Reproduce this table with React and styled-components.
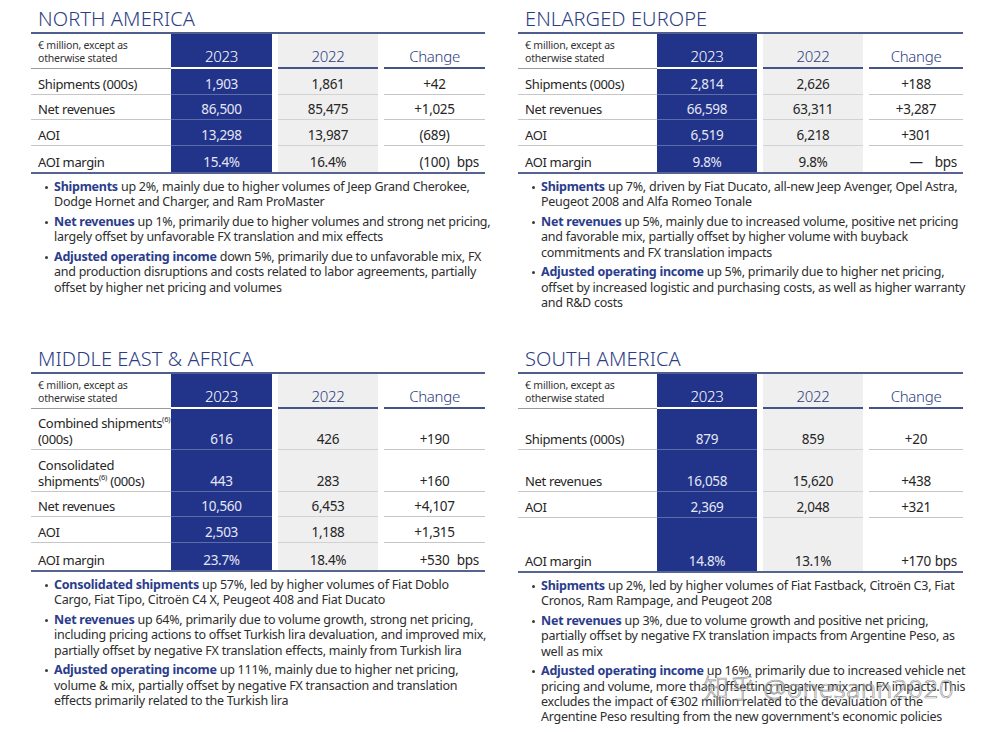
import React from "react";
import styled, { createGlobalStyle } from "styled-components";

const GlobalStyle = createGlobalStyle`
  html, body {
    margin: 0;
    padding: 0;
    background: #fff;
  }
  body {
    font-family: "Noto Sans", "Open Sans", sans-serif;
    color: #2a2a2a;
  }
`;

const NAVY = "#22348a";
const INK = "#2d3d82";

const Page = styled.div`
  position: relative;
  width: 1003px;
  height: 732px;
  overflow: hidden;
  display: grid;
  grid-template-columns: 454px 445px;
  grid-template-rows: 340px auto;
  column-gap: 33px;
  padding-left: 31px;
  box-sizing: border-box;
`;

const Panel = styled.section`
  display: flex;
  flex-direction: column;
`;

const Title = styled.h2`
  margin: 6px 0 1px 7px;
  font-size: 20px;
  line-height: 25px;
  font-weight: 300;
  color: ${INK};
  letter-spacing: 0.1px;
`;

const Table = styled.div`
  border-top: 2px solid #4f5e8c;
  border-bottom: 2px solid #56658f;
`;

const Row = styled.div`
  display: flex;
  height: ${(p) => p.$h}px;
`;

const lineFor = (kind, head, last) => {
  if (last) return "none";
  if (head) {
    if (kind === "label") return "1px solid #9a9a9a";
    if (kind === "cur") return "2px solid #fff";
    return "2px solid #44548a";
  }
  if (kind === "cur") return "1px solid rgba(255,255,255,0.28)";
  if (kind === "prev") return "1px solid #d2d2d2";
  return "1px solid #c6c6c6";
};

const sizeFor = (kind, head) => {
  if (head && kind !== "label") return 15;
  if (kind === "label") return 13;
  return 13.5;
};

const Cell = styled.div`
  flex: none;
  width: ${(p) => p.$w}px;
  margin-left: ${(p) => (p.$kind === "prev" || p.$kind === "chg" ? 6 : 0)}px;
  box-sizing: border-box;
  display: flex;
  align-items: flex-end;
  justify-content: ${(p) => (p.$kind === "label" ? "flex-start" : "center")};
  padding: 0 0 ${(p) => (p.$head ? (p.$kind === "label" ? 4 : 2) : 2)}px
    ${(p) => (p.$kind === "label" ? 7 : 0)}px;
  background: ${(p) => (p.$kind === "cur" ? NAVY : p.$kind === "prev" ? "#efefef" : "#fff")};
  color: ${(p) =>
    p.$kind === "cur" ? (p.$head ? "#fff" : "#e4e7f4") : p.$head && p.$kind !== "label" ? INK : "#262626"};
  font-size: ${(p) => sizeFor(p.$kind, p.$head)}px;
  font-weight: ${(p) => (p.$head && p.$kind !== "label" ? 300 : 400)};
  line-height: ${(p) => (p.$head && p.$kind !== "label" ? 18 : 15.5)}px;
  letter-spacing: ${(p) => (p.$kind === "label" ? -0.35 : -0.3)}px;
  white-space: nowrap;
  border-bottom: ${(p) => lineFor(p.$kind, p.$head, p.$last)};
`;

const Unit = styled.div`
  font-size: 10.5px;
  line-height: 12.5px;
  letter-spacing: -0.2px;
  color: #333;
`;

const ChangeBox = styled.div`
  width: 100%;
  display: grid;
  grid-template-columns: 1fr auto 1fr;
  align-items: end;
`;

const ChangeValue = styled.span`
  grid-column: 2;
`;

const Bps = styled.span`
  grid-column: 3;
  justify-self: end;
  padding-right: 6px;
`;

const Sup = styled.sup`
  font-size: 7.5px;
  line-height: 0;
  vertical-align: 6px;
  letter-spacing: -0.2px;
`;

const Bullets = styled.ul`
  list-style: none;
  margin: 5px 0 0;
  padding: 0;
`;

const Bullet = styled.li`
  position: relative;
  padding-left: 23px;
  margin-bottom: 4.5px;
  font-size: 12.5px;
  line-height: 15.3px;
  letter-spacing: -0.25px;
  white-space: nowrap;
  color: #2e2e2e;

  &::before {
    content: "";
    position: absolute;
    left: 14px;
    top: 6.5px;
    width: 3px;
    height: 3px;
    border-radius: 50%;
    background: #3a3a3a;
  }
`;

const Term = styled.b`
  color: #2b3c8c;
  font-weight: 700;
`;

const Watermark = styled.div`
  position: absolute;
  left: 703px;
  top: 668px;
  font-family: "Noto Sans", "Noto Sans CJK SC", sans-serif;
  font-size: 26px;
  font-weight: 300;
  letter-spacing: 0.5px;
  color: rgba(255, 255, 255, 0.5);
  -webkit-text-stroke: 0.7px rgba(110, 110, 110, 0.75);
  pointer-events: none;
`;

const LEFT = [140, 101, 100, 101];
const RIGHT = [139, 100, 100, 94];

const TOP_H = [35, 26, 25, 26, 26];
const MEA_H = [35, 41, 42, 25, 26, 27];
const SA_H = [35, 41, 42, 26, 53];

const SH = <Sup>(6)</Sup>;

const sections = [
  {
    title: "NORTH AMERICA",
    widths: LEFT,
    heights: TOP_H,
    rows: [
      ["Shipments (000s)", "1,903", "1,861", "+42"],
      ["Net revenues", "86,500", "85,475", "+1,025"],
      ["AOI", "13,298", "13,987", "(689)"],
      ["AOI margin", "15.4%", "16.4%", "(100)", "bps"],
    ],
    bullets: [
      ["Shipments", ["up 2%, mainly due to higher volumes of Jeep Grand Cherokee,", "Dodge Hornet and Charger, and Ram ProMaster"]],
      ["Net revenues", ["up 1%, primarily due to higher volumes and strong net pricing,", "largely offset by unfavorable FX translation and mix effects"]],
      ["Adjusted operating income", ["down 5%, primarily due to unfavorable mix, FX", "and production disruptions and costs related to labor agreements, partially", "offset by higher net pricing and volumes"]],
    ],
  },
  {
    title: "ENLARGED EUROPE",
    widths: RIGHT,
    heights: TOP_H,
    rows: [
      ["Shipments (000s)", "2,814", "2,626", "+188"],
      ["Net revenues", "66,598", "63,311", "+3,287"],
      ["AOI", "6,519", "6,218", "+301"],
      ["AOI margin", "9.8%", "9.8%", "—", "bps"],
    ],
    bullets: [
      ["Shipments", ["up 7%, driven by Fiat Ducato, all-new Jeep Avenger, Opel Astra,", "Peugeot 2008 and Alfa Romeo Tonale"]],
      ["Net revenues", ["up 5%, mainly due to increased volume, positive net pricing", "and favorable mix, partially offset by higher volume with buyback", "commitments and FX translation impacts"]],
      ["Adjusted operating income", ["up 5%, primarily due to higher net pricing,", "offset by increased logistic and purchasing costs, as well as higher warranty", "and R&D costs"]],
    ],
  },
  {
    title: "MIDDLE EAST & AFRICA",
    widths: LEFT,
    heights: MEA_H,
    rows: [
      [<>Combined shipments{SH}<br />(000s)</>, "616", "426", "+190"],
      [<>Consolidated<br />shipments{SH} (000s)</>, "443", "283", "+160"],
      ["Net revenues", "10,560", "6,453", "+4,107"],
      ["AOI", "2,503", "1,188", "+1,315"],
      ["AOI margin", "23.7%", "18.4%", "+530", "bps"],
    ],
    bullets: [
      ["Consolidated shipments", ["up 57%, led by higher volumes of Fiat Doblo", "Cargo, Fiat Tipo, Citroën C4 X, Peugeot 408 and Fiat Ducato"]],
      ["Net revenues", ["up 64%, primarily due to volume growth, strong net pricing,", "including pricing actions to offset Turkish lira devaluation, and improved mix,", "partially offset by negative FX translation effects, mainly from Turkish lira"]],
      ["Adjusted operating income", ["up 111%, mainly due to higher net pricing,", "volume & mix, partially offset by negative FX transaction and translation", "effects primarily related to the Turkish lira"]],
    ],
  },
  {
    title: "SOUTH AMERICA",
    widths: RIGHT,
    heights: SA_H,
    rows: [
      ["Shipments (000s)", "879", "859", "+20"],
      ["Net revenues", "16,058", "15,620", "+438"],
      ["AOI", "2,369", "2,048", "+321"],
      ["AOI margin", "14.8%", "13.1%", "+170", "bps"],
    ],
    bullets: [
      ["Shipments", ["up 2%, led by higher volumes of Fiat Fastback, Citroën C3, Fiat", "Cronos, Ram Rampage, and Peugeot 208"]],
      ["Net revenues", ["up 3%, due to volume growth and positive net pricing,", "partially offset by negative FX translation impacts from Argentine Peso, as", "well as mix"]],
      ["Adjusted operating income", ["up 16%, primarily due to increased vehicle net", "pricing and volume, more than offsetting negative mix and FX impacts. This", "excludes the impact of €302 million related to the devaluation of the", "Argentine Peso resulting from the new government's economic policies"]],
    ],
  },
];

const KINDS = ["label", "cur", "prev", "chg"];

const RegionPanel = ({ section }) => {
  const { title, widths, heights, rows, bullets } = section;
  return (
    <Panel>
      <Title>{title}</Title>
      <Table>
        <Row $h={heights[0]}>
          <Cell $kind="label" $w={widths[0]} $head>
            <Unit>
              € million, except as
              <br />
              otherwise stated
            </Unit>
          </Cell>
          <Cell $kind="cur" $w={widths[1]} $head>2023</Cell>
          <Cell $kind="prev" $w={widths[2]} $head>2022</Cell>
          <Cell $kind="chg" $w={widths[3]} $head>Change</Cell>
        </Row>
        {rows.map((r, i) => {
          const last = i === rows.length - 1;
          return (
            <Row key={i} $h={heights[i + 1]}>
              {KINDS.map((k, j) => (
                <Cell key={k} $kind={k} $w={widths[j]} $last={last}>
                  {k === "chg" ? (
                    <ChangeBox>
                      <ChangeValue>{r[3]}</ChangeValue>
                      {r[4] && <Bps>{r[4]}</Bps>}
                    </ChangeBox>
                  ) : (
                    <span>{r[j]}</span>
                  )}
                </Cell>
              ))}
            </Row>
          );
        })}
      </Table>
      <Bullets>
        {bullets.map(([term, lines]) => (
          <Bullet key={term + lines[0]}>
            <Term>{term}</Term> {lines[0]}
            {lines.slice(1).map((l) => (
              <React.Fragment key={l}>
                <br />
                {l}
              </React.Fragment>
            ))}
          </Bullet>
        ))}
      </Bullets>
    </Panel>
  );
};

export default function App() {
  return (
    <>
      <GlobalStyle />
      <Page>
        {sections.map((s) => (
          <RegionPanel key={s.title} section={s} />
        ))}
        <Watermark>知乎 @onesann2020</Watermark>
      </Page>
    </>
  );
}
